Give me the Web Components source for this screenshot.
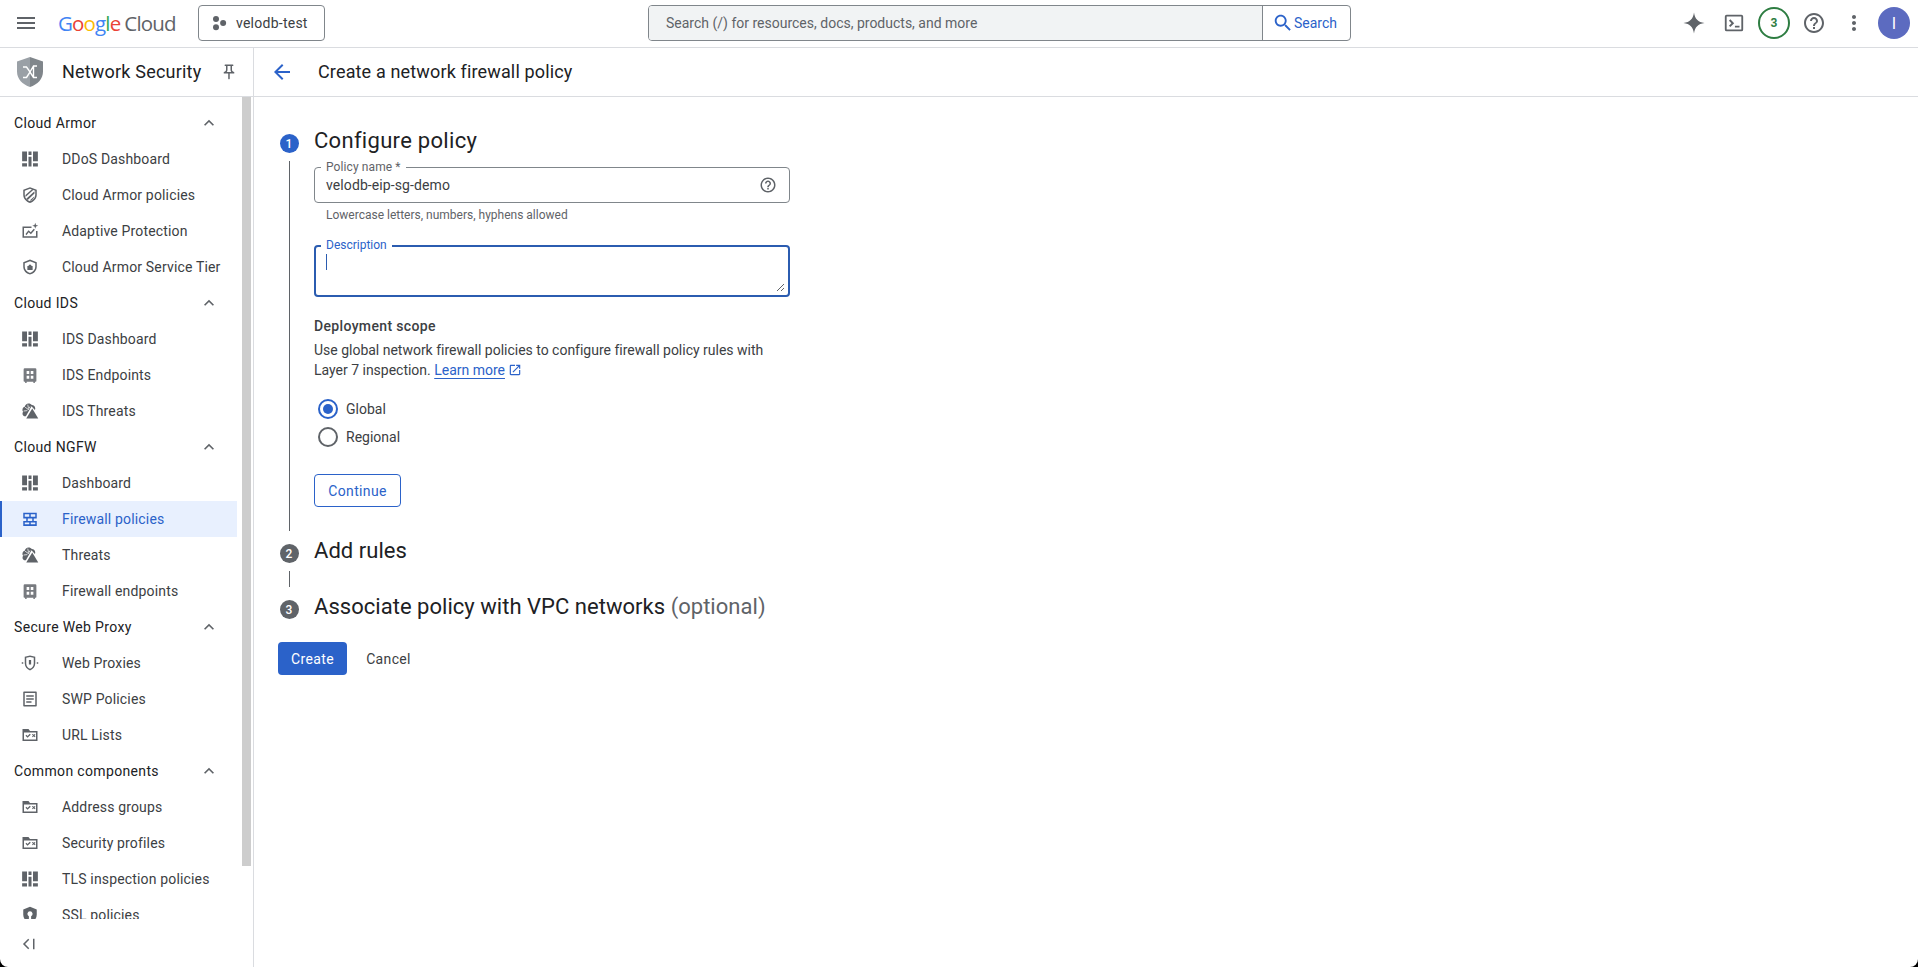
<!DOCTYPE html>
<html lang="en">
<head>
<meta charset="utf-8">
<title>Create a network firewall policy</title>
<style>
  html, body { margin: 0; height: 100%; overflow: hidden; background: #000; }
  body { font: 14px Roboto, "Liberation Sans", sans-serif; color: #202124; }
</style>
</head>
<body>
<gc-console>
  <gc-topbar slot="top"></gc-topbar>
  <gc-sidebar slot="side">
    <nav-section title="Cloud Armor">
      <nav-item icon="dash">DDoS Dashboard</nav-item>
      <nav-item icon="armor">Cloud Armor policies</nav-item>
      <nav-item icon="adaptive">Adaptive Protection</nav-item>
      <nav-item icon="tier">Cloud Armor Service Tier</nav-item>
    </nav-section>
    <nav-section title="Cloud IDS">
      <nav-item icon="dash">IDS Dashboard</nav-item>
      <nav-item icon="endpoint">IDS Endpoints</nav-item>
      <nav-item icon="threat">IDS Threats</nav-item>
    </nav-section>
    <nav-section title="Cloud NGFW">
      <nav-item icon="dash">Dashboard</nav-item>
      <nav-item icon="firewall" active>Firewall policies</nav-item>
      <nav-item icon="threat">Threats</nav-item>
      <nav-item icon="endpoint">Firewall endpoints</nav-item>
    </nav-section>
    <nav-section title="Secure Web Proxy">
      <nav-item icon="proxy">Web Proxies</nav-item>
      <nav-item icon="doc">SWP Policies</nav-item>
      <nav-item icon="folder">URL Lists</nav-item>
    </nav-section>
    <nav-section title="Common components">
      <nav-item icon="folder">Address groups</nav-item>
      <nav-item icon="folder">Security profiles</nav-item>
      <nav-item icon="dash">TLS inspection policies</nav-item>
      <nav-item icon="ssl">SSL policies</nav-item>
    </nav-section>
  </gc-sidebar>
  <gc-page slot="main" heading="Create a network firewall policy">
    <wizard-step num="1" heading="Configure policy" current>
      <text-field label="Policy name *" value="velodb-eip-sg-demo" hint="Lowercase letters, numbers, hyphens allowed"></text-field>
      <area-field label="Description"></area-field>
      <scope-picker></scope-picker>
      <gc-button outline>Continue</gc-button>
    </wizard-step>
    <wizard-step num="2" heading="Add rules" connector></wizard-step>
    <wizard-step num="3" heading="Associate policy with VPC networks" note="(optional)"></wizard-step>
    <form-actions></form-actions>
  </gc-page>
</gc-console>

<script>
const ICONS = {
  menu: '<path d="M3 18h18v-2H3v2zm0-5h18v-2H3v2zm0-7v2h18V6H3z"/>',
  back: '<path d="M20 11H7.83l5.59-5.59L12 4l-8 8 8 8 1.41-1.41L7.83 13H20v-2z"/>',
  help: '<path d="M11 18h2v-2h-2v2zm1-16C6.48 2 2 6.48 2 12s4.48 10 10 10 10-4.48 10-10S17.52 2 12 2zm0 18c-4.41 0-8-3.59-8-8s3.59-8 8-8 8 3.59 8 8-3.59 8-8 8zm0-14c-2.21 0-4 1.79-4 4h2c0-1.1.9-2 2-2s2 .9 2 2c0 2-3 1.75-3 5h2c0-2.25 3-2.5 3-5 0-2.21-1.79-4-4-4z"/>',
  more: '<path d="M12 8c1.1 0 2-.9 2-2s-.9-2-2-2-2 .9-2 2 .9 2 2 2zm0 2c-1.1 0-2 .9-2 2s.9 2 2 2 2-.9 2-2-.9-2-2-2zm0 6c-1.1 0-2 .9-2 2s.9 2 2 2 2-.9 2-2-.9-2-2-2z"/>',
  search: '<path d="M15.5 14h-.79l-.28-.27C15.41 12.59 16 11.11 16 9.5 16 5.91 13.09 3 9.5 3S3 5.91 3 9.5 5.91 16 9.5 16c1.61 0 3.09-.59 4.23-1.57l.27.28v.79l5 4.99L20.49 19l-4.99-5zm-6 0C7.01 14 5 11.99 5 9.5S7.01 5 9.5 5 14 7.01 14 9.5 11.99 14 9.5 14z"/>',
  less: '<path d="M12 8l-6 6 1.41 1.41L12 10.83l4.59 4.58L18 14z"/>',
  pin: '<path d="M14 4v5c0 1.12.37 2.16 1 3H9c.65-.86 1-1.9 1-3V4h4m3-2H7c-.55 0-1 .45-1 1s.45 1 1 1h1v5c0 1.66-1.34 3-3 3v2h5.97v7l1 1 1-1v-7H19v-2c-1.66 0-3-1.34-3-3V4h1c.55 0 1-.45 1-1s-.45-1-1-1z"/>',
  open: '<path d="M19 19H5V5h7V3H5c-1.11 0-2 .9-2 2v14c0 1.1.89 2 2 2h14c1.1 0 2-.9 2-2v-7h-2v7zM14 3v2h3.59l-9.83 9.83 1.41 1.41L19 6.41V10h2V3h-7z"/>',
  spark: '<path d="M12 1.500C12.900 8 16 11.100 22.500 12 16 12.900 12.900 16 12 22.500 11.100 16 8 12.900 1.500 12 8 11.100 11.100 8 12 1.500z"/>',
  terminal: '<path fill-rule="evenodd" d="M4 3h16a2 2 0 0 1 2 2v14a2 2 0 0 1-2 2H4a2 2 0 0 1-2-2V5a2 2 0 0 1 2-2zm0 2v14h16V5H4z"/><path d="M6.500 9.500 8 8l4.200 4.200L8 16.400l-1.500-1.500 2.700-2.700zM13 15h5v1.800h-5z"/>',
  project: '<circle cx="8" cy="6.500" r="4"/><circle cx="8" cy="17.500" r="4"/><circle cx="17.500" cy="12" r="4"/>',
  collapse: '<path d="M11 6.400 9.600 5 2.600 12l7 7 1.400-1.400L5.400 12zM16 5h2v14h-2z"/>',
  dash: '<path d="M1.500 2h6.500v13H1.500zM1.500 17.500H8V22H1.500zM10 2h4v4.500h-4zM10 9h4v13h-4zM16 2h6.500v13H16zM16 17.500h6.500V22H16z"/>',
  armor: '<path fill-rule="evenodd" d="M12 1.500 21 5v6.500c0 5.200-3.700 9.300-9 11-5.300-1.700-9-5.800-9-11V5zM12 3.600 5 6.300v5.200c0 4 2.800 7.400 7 8.900 4.200-1.500 7-4.900 7-8.900V6.300z"/><path d="M6 12 15 4l2 .8L6 14.500zM7 17 18 7v3L9 18.500zM12 19l6-5.500c-.5 2.500-2.500 4.800-5 6z"/>',
  adaptive: '<path d="M2 6h12v2H4v11h16v-7h2v9H2z"/><path d="m6 16 4-5 3 2.500 4-4.500 1.500 1.300-5.300 6-3-2.500-3 3.800zM19 1l1 3 3 1-3 1-1 3-1-3-3-1 3-1z"/>',
  tier: '<path fill-rule="evenodd" d="M12 2 21 5.500v6c0 5-3.700 9-9 10.500-5.300-1.500-9-5.500-9-10.500v-6zM12 4.200 5 6.900v4.600c0 3.900 2.800 7 7 8.400 4.200-1.400 7-4.500 7-8.400V6.900z"/><path d="M8.500 10.500h7V16h-7zM10 10.500a2 2 0 0 1 4 0v.5h-4z"/>',
  endpoint: '<path fill-rule="evenodd" opacity=".85" d="M5 3h14a1.500 1.500 0 0 1 1.500 1.500V20a1 1 0 0 1-1 1h-1v1.500h-2V21h-9v1.500h-2V21h-1a1 1 0 0 1-1-1V4.500A1.500 1.500 0 0 1 5 3zm2.500 3.500v4H11v-4zm5.500 0v4h3.500v-4zM7.500 13v4H11v-4zm5.500 0v4h3.500v-4z"/>',
  threat: '<path d="M10 2c2 0 3.500.8 4.500 2 2.500.2 4.500 2 4.500 4.500 0 .8-.2 1.500-.5 2.100L14 5.500 6.500 19H5.500C3.500 19 2 17.400 2 15.500c0-1 .3-1.800 1-2.500-.9-1-1.300-2-1-3.500.3-1.700 1.600-2.800 3-3.200C5.500 3.800 7.500 2 10 2z"/><path d="M5.500 7 10 10M9 3.500l1 5M3.500 12l5-.5M12 6l-2.500 4.500" stroke="#fff" stroke-width="1"/><path d="M15 8.500 23 22H7z"/>',
  firewall: '<path d="M3 3.500h18v2.200H3zM3 9h18v2.200H3zM3 14.500h18v2.200H3zM3 19h18v2.200H3zM3 5.500h2v3.500H3zM11 5.500h2v3.500h-2zM19 5.500h2v3.500h-2zM7 11h2v3.500H7zM15 11h2v3.500h-2zM3 16.500h2V19H3zM11 16.500h2V19h-2zM19 16.500h2V19h-2z"/>',
  proxy: '<path fill-rule="evenodd" d="M5 3.500 12 2l7 1.500v9c0 4.500-3 7.500-7 9.500-4-2-7-5-7-9.500zm2 1.600v7.400c0 3.300 2 5.700 5 7.200 3-1.500 5-3.900 5-7.200V5.100L12 4z"/><path d="M10.500 8h3v6h-3zM1 11h2v2H1zM21 11h2v2h-2z"/>',
  doc: '<path fill-rule="evenodd" d="M4 2h16a1 1 0 0 1 1 1v18a1 1 0 0 1-1 1H4a1 1 0 0 1-1-1V3a1 1 0 0 1 1-1zm1 2v16h14V4z"/><path d="M7 7h10v2H7zM7 11h10v2H7zM7 15h7v2H7z"/>',
  folder: '<path fill-rule="evenodd" d="M2 4h8l2 2.500h10V20H2zm2 4.500V18h16V8.500z"/><path d="m6 13 1.200-1.200 1.500 1.500 3-3L13 11.500l-4.300 4.200zM14.500 11l1.200-.5 1.300 1.300 1.300-1.300 1 1-1.300 1.300 1.300 1.300-1 1-1.300-1.300-1.300 1.300-1-1 1.300-1.300z"/>',
  ssl: '<path fill-rule="evenodd" d="M12 1 21 4.500v7c0 5.200-3.700 9.500-9 11.500-5.300-2-9-6.300-9-11.500v-7zm0 6a3.500 3.500 0 0 0-1.500 6.600V19h3v-5.400A3.500 3.500 0 0 0 12 7z"/>'
};

class GcIcon extends HTMLElement {
  constructor() {
    super();
    const size = this.getAttribute('size') || 24;
    this.attachShadow({ mode: 'open' }).innerHTML = `
      <style>
        :host { display: inline-flex; flex: none; width: ${size}px; height: ${size}px; color: #5f6368; }
        svg { width: 100%; height: 100%; fill: currentColor; display: block; }
      </style>
      <svg viewBox="0 0 24 24">${ICONS[this.getAttribute('name')] || ''}</svg>`;
  }
}

class GcConsole extends HTMLElement {
  constructor() {
    super();
    this.attachShadow({ mode: 'open' }).innerHTML = `
      <style>
        :host { display: grid; grid-template-columns: 254px 1fr; grid-template-rows: 48px 1fr; height: 967px; background: #fff; border-radius: 0 0 8px 8px; overflow: hidden; }
        .top { grid-column: 1 / 3; }
      </style>
      <div class="top"><slot name="top"></slot></div>
      <slot name="side"></slot>
      <slot name="main"></slot>`;
  }
}

class GcTopbar extends HTMLElement {
  constructor() {
    super();
    this.attachShadow({ mode: 'open' }).innerHTML = `
      <style>
        :host { display: flex; align-items: center; height: 48px; box-sizing: border-box; border-bottom: 1px solid #dadce0; padding-bottom: 1px; padding-left: 14px; }
        .logo { margin-left: 20px; width: 118px; font: 400 20.500px "Open Sans", Roboto, sans-serif; letter-spacing: -.85px; white-space: nowrap; color: #5f6368; }
        .logo b { font-weight: 500; }
        .logo .c { margin-left: 4px; font-family: "Open Sans", sans-serif; font-weight: 400; }
        .chip { margin-left: 22px; display: flex; align-items: center; box-sizing: border-box; width: 127px; height: 36px; border: 1px solid #80868b; border-radius: 4px; padding-left: 11px; gap: 8px; font-size: 14px; letter-spacing: .25px; color: #3c4043; }
        .search { margin-left: 323px; display: flex; box-sizing: border-box; width: 703px; height: 36px; border: 1px solid #80868b; border-radius: 4px; overflow: hidden; }
        .field { flex: 1; background: #f1f3f4; padding-left: 17px; line-height: 34px; color: #5f6368; font-size: 14px; }
        .go { width: 88px; box-sizing: border-box; border-left: 1px solid #80868b; display: flex; align-items: center; padding-left: 9px; color: #2b62c9; font-size: 14px; }
        .tools { margin-left: auto; display: flex; align-items: center; gap: 10px; padding-right: 8px; }
        .tool { width: 30px; height: 32px; display: flex; align-items: center; justify-content: center; }
        .count { box-sizing: border-box; width: 32px; height: 32px; flex: none; border: 2px solid #2e7d42; border-radius: 50%; display: flex; align-items: center; justify-content: center; color: #2e7d42; font-weight: 700; font-size: 12px; }
        .avatar { width: 32px; height: 32px; border-radius: 50%; background: #5c6bc0; color: #fff; display: flex; align-items: center; justify-content: center; font-size: 16px; margin-left: -1px; }
      </style>
      <gc-icon name="menu"></gc-icon>
      <div class="logo"><b style="color:#4285f4">G</b><b style="color:#ea4335">o</b><b style="color:#fbbc04">o</b><b style="color:#4285f4">g</b><b style="color:#34a853">l</b><b style="color:#ea4335">e</b><span class="c">Cloud</span></div>
      <div class="chip"><gc-icon name="project" size="18"></gc-icon>velodb-test</div>
      <div class="search">
        <div class="field">Search (/) for resources, docs, products, and more</div>
        <div class="go"><gc-icon name="search" size="22" style="color:#2b62c9"></gc-icon>Search</div>
      </div>
      <div class="tools">
        <div class="tool"><gc-icon name="spark"></gc-icon></div>
        <div class="tool"><gc-icon name="terminal" size="22"></gc-icon></div>
        <div class="tool"><div class="count">3</div></div>
        <div class="tool"><gc-icon name="help"></gc-icon></div>
        <div class="tool"><gc-icon name="more"></gc-icon></div>
        <div class="avatar">I</div>
      </div>`;
  }
}

class GcSidebar extends HTMLElement {
  constructor() {
    super();
    this.attachShadow({ mode: 'open' }).innerHTML = `
      <style>
        :host { display: flex; flex-direction: column; height: 919px; box-sizing: border-box; border-right: 1px solid #dadce0; overflow: hidden; }
        .head { flex: none; height: 49px; box-sizing: border-box; border-bottom: 1px solid #dadce0; padding-bottom: 1px; display: flex; align-items: center; padding-left: 17px; }
        .name { margin-left: 19px; font-size: 18px; color: #202124; flex: 1; letter-spacing: .2px; }
        .head gc-icon { margin-right: 15px; }
        .body { flex: 1; min-height: 0; display: flex; }
        .list { flex: none; width: 242px; box-sizing: border-box; padding: 8px 5px 0 0; overflow: hidden; }
        .track { flex: none; width: 9px; }
        .thumb { height: 769px; background: #cdcdcd; }
        .foot { flex: none; height: 48px; box-sizing: border-box; display: flex; align-items: center; padding: 2px 0 0 21px; }
      </style>
      <div class="head">
        <svg width="26" height="30" viewBox="2 2 26 30">
          <path d="M15 2 28 6.500v10c0 7.500-5.500 13-13 15.500z" fill="#80868b"/>
          <path d="M15 2 2 6.500v10C2 24 7.500 29.500 15 32z" fill="#9aa0a6"/>
          <path d="M8 12h3.500L15 17l3.500-6H22M8 22.500h3.500L15 17l3.500 5.500H22M18.500 11v11" fill="none" stroke="#fff" stroke-width="1.400"/>
        </svg>
        <div class="name">Network Security</div>
        <gc-icon name="pin" size="18"></gc-icon>
      </div>
      <div class="body">
        <div class="list"><slot></slot></div>
        <div class="track"><div class="thumb"></div></div>
      </div>
      <div class="foot"><gc-icon name="collapse" size="18"></gc-icon></div>`;
  }
}

class NavSection extends HTMLElement {
  constructor() {
    super();
    this.attachShadow({ mode: 'open' }).innerHTML = `
      <style>
        :host { display: block; }
        .title { height: 36px; display: flex; align-items: center; justify-content: space-between; padding: 0 18px 0 14px; font-size: 14px; color: #202124; letter-spacing: .35px; }
      </style>
      <div class="title">${this.getAttribute('title')}<gc-icon name="less" size="20"></gc-icon></div>
      <slot></slot>`;
  }
}

class NavItem extends HTMLElement {
  constructor() {
    super();
    const active = this.hasAttribute('active');
    this.attachShadow({ mode: 'open' }).innerHTML = `
      <style>
        :host { display: flex; align-items: center; height: 36px; box-sizing: border-box; padding-left: 21px; gap: 23px; color: #3c4043; font-size: 14px; letter-spacing: .16px; white-space: nowrap; }
        :host([active]) { background: #e8f0fe; color: #2b62c9; box-shadow: inset 2px 0 0 #2b62c9; }
        gc-icon { ${active ? 'color: #2b62c9;' : ''} }
      </style>
      <gc-icon name="${this.getAttribute('icon')}" size="18"></gc-icon><slot></slot>`;
  }
}

class GcPage extends HTMLElement {
  constructor() {
    super();
    this.attachShadow({ mode: 'open' }).innerHTML = `
      <style>
        :host { display: block; min-width: 0; }
        .head { height: 49px; box-sizing: border-box; border-bottom: 1px solid #dadce0; padding-bottom: 1px; display: flex; align-items: center; padding-left: 16px; }
        .head span { margin-left: 24px; font-size: 18px; color: #202124; letter-spacing: .15px; }
        .body { padding: 30px 0 0 24px; }
      </style>
      <div class="head"><gc-icon name="back" style="color:#2b62c9"></gc-icon><span>${this.getAttribute('heading')}</span></div>
      <div class="body"><slot></slot></div>`;
  }
}

class WizardStep extends HTMLElement {
  constructor() {
    super();
    const current = this.hasAttribute('current');
    const note = this.getAttribute('note');
    this.attachShadow({ mode: 'open' }).innerHTML = `
      <style>
        :host { display: flex; gap: 14px; margin-bottom: 6px; }
        .rail { flex: none; width: 22px; display: flex; flex-direction: column; align-items: center; padding-top: 7px; }
        .num { width: 19px; height: 19px; border-radius: 50%; background: ${current ? '#2b62c9' : '#5f6368'}; color: #fff; font-size: 12px; font-weight: 500; display: flex; align-items: center; justify-content: center; flex: none; }
        .line { width: 1px; background: #5f6368; margin-top: 8px; flex: 1; }
        .main { width: 476px; }
        h2 { margin: 0; font: 400 22px/28px Roboto, sans-serif; color: #202124; white-space: nowrap; letter-spacing: ${current ? '.3px' : '.03px'}; }
        h2 span { color: #5f6368; }
      </style>
      <div class="rail"><div class="num">${this.getAttribute('num')}</div>${current || this.hasAttribute('connector') ? '<div class="line"></div>' : ''}</div>
      <div class="main" style="${current ? '' : 'padding-bottom:' + (this.hasAttribute('connector') ? 22 : 0) + 'px'}">
        <h2>${this.getAttribute('heading')}${note ? ' <span>' + note + '</span>' : ''}</h2>
        <slot></slot>
      </div>`;
  }
}

class TextField extends HTMLElement {
  constructor() {
    super();
    this.attachShadow({ mode: 'open' }).innerHTML = `
      <style>
        :host { display: block; margin-top: 12px; }
        .box { position: relative; height: 36px; box-sizing: border-box; border: 1px solid #80868b; border-radius: 4px; display: flex; align-items: center; justify-content: space-between; padding: 0 12px 0 11px; font-size: 14px; letter-spacing: .1px; color: #3c4043; }
        label { position: absolute; left: 6px; top: -7px; padding: 0 5px; background: #fff; font-size: 12px; line-height: 13px; color: #5f6368; }
        .hint { margin: 4px 0 0 12px; font-size: 12px; line-height: 16px; color: #5f6368; }
      </style>
      <div class="box"><label>${this.getAttribute('label')}</label>${this.getAttribute('value')}<gc-icon name="help" size="18"></gc-icon></div>
      <div class="hint">${this.getAttribute('hint')}</div>`;
  }
}

class AreaField extends HTMLElement {
  constructor() {
    super();
    this.attachShadow({ mode: 'open' }).innerHTML = `
      <style>
        :host { display: block; margin-top: 22px; }
        .box { position: relative; height: 52px; box-sizing: border-box; border: 2px solid #2b5cb0; border-radius: 4px; padding: 7px 0 0 10px; }
        label { position: absolute; left: 5px; top: -8px; padding: 0 5px; background: #fff; font-size: 12px; line-height: 13px; color: #2b62c9; }
        .caret { width: 1px; height: 16px; background: #2b5cb0; }
        svg { position: absolute; right: 3px; bottom: 3px; }
      </style>
      <div class="box"><label>${this.getAttribute('label')}</label><div class="caret"></div>
        <svg width="9" height="9" viewBox="0 0 9 9"><path d="M1 8 8 1M5 8 8 5" stroke="#5f6368" fill="none"/></svg>
      </div>`;
  }
}

class RadioOption extends HTMLElement {
  constructor() {
    super();
    const on = this.hasAttribute('checked');
    this.attachShadow({ mode: 'open' }).innerHTML = `
      <style>
        :host { display: flex; align-items: center; height: 28px; gap: 8px; padding-left: 4px; font-size: 14px; color: #3c4043; }
        .dot { width: 20px; height: 20px; box-sizing: border-box; border-radius: 50%; border: 2px solid ${on ? '#2b62c9' : '#5f6368'}; display: flex; align-items: center; justify-content: center; }
        .dot i { width: 10px; height: 10px; border-radius: 50%; background: ${on ? '#2b62c9' : 'transparent'}; }
      </style>
      <div class="dot"><i></i></div><slot></slot>`;
  }
}

class ScopePicker extends HTMLElement {
  constructor() {
    super();
    this.attachShadow({ mode: 'open' }).innerHTML = `
      <style>
        :host { display: block; margin-top: 19px; font-size: 14px; line-height: 20px; color: #3c4043; }
        h3 { margin: 0 0 4px; font: 500 14px/20px Roboto, sans-serif; color: #3c4043; letter-spacing: .35px; }
        p { margin: 0; width: 476px; letter-spacing: -.01px; }
        a { color: #2b62c9; text-decoration: underline; text-underline-offset: 3px; }
        gc-icon { vertical-align: -2px; color: #2b62c9; }
        .opts { margin-top: 15px; }
      </style>
      <h3>Deployment scope</h3>
      <p>Use global network firewall policies to configure firewall policy rules with<br>Layer 7 inspection. <a>Learn more</a> <gc-icon name="open" size="14"></gc-icon></p>
      <div class="opts"><radio-option checked>Global</radio-option><radio-option>Regional</radio-option></div>`;
  }
}

class GcButton extends HTMLElement {
  constructor() {
    super();
    this.attachShadow({ mode: 'open' }).innerHTML = `
      <style>
        :host { display: inline-flex; align-items: center; justify-content: center; box-sizing: border-box; height: 33px; padding: 0 12px; border-radius: 4px; font-size: 14px; letter-spacing: .35px; }
        :host([outline]) { border: 1px solid #2b62c9; color: #2b62c9; background: #fff; margin: 23px 0 24px; width: 87px; }
        :host([primary]) { background: #2b62c9; color: #fff; width: 69px; }
        :host([plain]) { color: #3c4043; width: 71px; margin-left: 2px; }
      </style>
      <slot></slot>`;
  }
}

class FormActions extends HTMLElement {
  constructor() {
    super();
    this.attachShadow({ mode: 'open' }).innerHTML = `
      <style>:host { display: flex; gap: 4px; margin-top: 21px; }</style>
      <gc-button primary>Create</gc-button><gc-button plain>Cancel</gc-button>`;
  }
}

customElements.define('gc-icon', GcIcon);
customElements.define('gc-console', GcConsole);
customElements.define('gc-topbar', GcTopbar);
customElements.define('gc-sidebar', GcSidebar);
customElements.define('nav-section', NavSection);
customElements.define('nav-item', NavItem);
customElements.define('gc-page', GcPage);
customElements.define('wizard-step', WizardStep);
customElements.define('text-field', TextField);
customElements.define('area-field', AreaField);
customElements.define('radio-option', RadioOption);
customElements.define('scope-picker', ScopePicker);
customElements.define('gc-button', GcButton);
customElements.define('form-actions', FormActions);
</script>
</body>
</html>
